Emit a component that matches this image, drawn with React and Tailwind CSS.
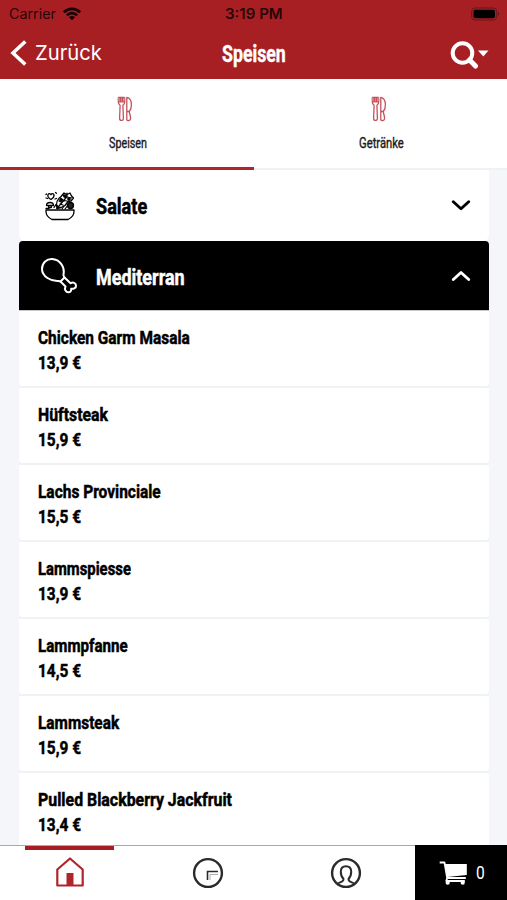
import { useLayoutEffect, useRef } from "react";

// Condensed label: squeezes its text horizontally to the given width.
function Fit({ w, className = "", children }) {
  const ref = useRef(null);
  useLayoutEffect(() => {
    const fit = () => {
      const el = ref.current;
      if (el) el.style.transform = `scaleX(${w / el.offsetWidth})`;
    };
    fit();
    document.fonts?.ready.then(fit);
  }, [w]);
  return (
    <span className="block" style={{ width: w }}>
      <span ref={ref} className={`inline-block origin-left whitespace-nowrap align-top ${className}`}>
        {children}
      </span>
    </span>
  );
}

const dishes = [
  ["Chicken Garm Masala", "13,9 €", 152],
  ["Hüftsteak", "15,9 €", 70],
  ["Lachs Provinciale", "15,5 €", 123],
  ["Lammspiesse", "13,9 €", 93],
  ["Lammpfanne", "14,5 €", 90],
  ["Lammsteak", "15,9 €", 81],
  ["Pulled Blackberry Jackfruit", "13,4 €", 194],
];

function Cutlery() {
  return (
    <svg className="h-[26px] w-4" viewBox="0 0 16 26" fill="none" stroke="#c4525c" strokeWidth="1.3" strokeLinejoin="round">
      <path d="M1.300 1.500v4.200c0 2 1 2.900 1.800 3.500L2.600 22.500c0 2.600 3.800 2.600 3.800 0L5.900 9.200c1-.6 1.800-1.500 1.800-3.500V1.500" />
      <path d="M1.300 1.500h6.400v3.600H1.300z" fill="#dc8d95" stroke="none" />
      <path d="M1.300 1.300h6.400M3.400 1.500v5M5.500 1.500v5M1.400 5.800h6.200" />
      <path d="M9.800 1.300v22.400c.5 1.300 3.800 1.200 3.800-1.200 0-2.400-.8-4.500-1.400-6.800 1.500-1.700 2.300-4 2.200-7.200C14.300 4.500 12.300 1.800 9.800 1.300zM10 15.500h2" />
    </svg>
  );
}

function Salad() {
  return (
    <svg className="h-[30px] w-[30px]" viewBox="0 0 30 30" fill="none" stroke="#000" strokeWidth="1.3" strokeLinecap="round" strokeLinejoin="round">
      <path d="M1 19h28v1.500c0 4-3 6.500-6 8H7c-3-1.500-6-4-6-8z" />
      <path d="M6 8.500C3.500 7 2.300 5.500 3 3.700c.7-1.500 2.300-1.300 3 0 .7-1.300 2.600-1.500 3 .2.400 1.700-1 3.300-3 4.600zM1 7l1.500.5M10.500 1.500l1 .7M1 3.500l.5-.5M10 8l1.500-.5" />
      <path d="M1.500 14.500c0-4 7-4 7 0zM3.700 14.500v2h2.600v-2M1 17.500h3M9 16.500l2-3 3 3" />
      <circle cx="25.500" cy="14.500" r="3" fill="#222" />
      <path d="M12 17.500c-1-4-.5-9 4-12l3-3.500 3 1.500 3-1.500 1.500 3 2 2-2.500 3-3 .5-3 4-4 2z" />
      <path d="M12 17.500l10-12M14 10l3 1.500M15.500 7l3.500 3M18 4l3 3M22 2v4l5 1M22 10l-3-.5M18 14l-3-1M20 18l3-4M17 18l2-3" strokeWidth="1.200" />
      <circle cx="16" cy="9" r="1.200" fill="#000" />
      <circle cx="20" cy="5" r="1.200" fill="#000" />
      <circle cx="24" cy="8" r="1.200" fill="#000" />
    </svg>
  );
}

function Drumstick() {
  return (
    <svg className="h-[38px] w-[38px]" viewBox="0 0 38 38" fill="none" stroke="#fff" strokeWidth="2" strokeLinecap="round" strokeLinejoin="round">
      <path d="M18.500 24C11 24.500 2 19.500 2 12 2 5.500 7 1.800 12 2c8 .5 13 8 11.500 15.500-.2 1.500 0 2 1 3l-4 4z" />
      <path d="M20.500 24.500l5 5c-1.500 3 .5 5.800 2.800 5.800 2 0 3.200-1.500 2.900-3.500 2.800.2 5-1 4.800-3.300-.2-2.500-3-3.700-5.500-2.200l-6-5.800" />
    </svg>
  );
}

function Chevron({ up }) {
  return (
    <svg className="h-3 w-5" viewBox="0 0 20 12" fill="none" stroke="currentColor" strokeWidth="2.900" strokeLinecap="round" strokeLinejoin="round">
      <path d={up ? "M2.300 9.500L10 2.500l7.700 7" : "M2.300 1.800L10 8.800l7.700-7"} />
    </svg>
  );
}

function Header() {
  return (
    <header className="h-[79px] shrink-0 bg-[#a71e23]">
      <div className="grid h-7 grid-cols-3 items-center pl-[9px] pr-[7px] text-black/80">
        <div className="flex items-center gap-[7px]">
          <div className="pt-[3px]">
            <Fit w={47} className="text-[14px] leading-5">Carrier</Fit>
          </div>
          <svg className="h-[14px] w-[18px]" viewBox="0 0 18 14" fill="none" stroke="#180505" strokeWidth="2.700">
            <path d="M.9 5.300c4.500-4.500 11.700-4.500 16.200 0M3.900 8.300c2.900-2.900 7.300-2.900 10.200 0" />
            <path d="M5.900 10.200c1.800-1.700 4.400-1.700 6.200 0L9 13.300z" fill="#180505" stroke="none" />
          </svg>
        </div>
        <div className="flex justify-center pt-[3px]">
          <Fit w={58} className="text-[14px] font-semibold leading-5">3:19 PM</Fit>
        </div>
        <div className="flex justify-end">
          <svg className="h-[14px] w-[29px]" viewBox="0 0 29 14">
            <rect x=".7" y="1" width="25" height="12" rx="3.500" fill="none" stroke="#66161a" />
            <rect x="2.500" y="2.700" width="21.500" height="8.600" rx="2" fill="#000" />
            <path d="M27 5c1.500.5 1.500 3.500 0 4z" fill="#66161a" />
          </svg>
        </div>
      </div>
      <div className="grid h-[51px] grid-cols-3 items-center text-white">
        <div className="flex items-center gap-2 pb-[2px] pl-[10px]">
          <svg className="h-[26px] w-[17px]" viewBox="0 0 17 26" fill="none" stroke="#fff" strokeWidth="3.600">
            <path d="M15.300 1.500L3 13l12.300 11.500" />
          </svg>
          <Fit w={67} className="text-[20.500px] leading-7">Zurück</Fit>
        </div>
        <div className="flex justify-center pt-[2px]">
          <Fit w={64} className="font-[Roboto] text-[23px] font-bold leading-7 [-webkit-text-stroke:0.4px]">Speisen</Fit>
        </div>
        <div className="flex justify-end pr-[18px] pt-[2px]">
          <svg className="h-[28px] w-[40px]" viewBox="0 0 40 28">
            <circle cx="13.500" cy="12" r="9.800" fill="none" stroke="#fff" strokeWidth="4" />
            <path d="M20.500 19l6 6" stroke="#fff" strokeWidth="5" strokeLinecap="round" />
            <path d="M29 9.500h10.500l-5.200 6z" fill="#fff" />
          </svg>
        </div>
      </div>
    </header>
  );
}

function Tab({ label, w, active }) {
  return (
    <div className={`flex flex-1 flex-col items-center pt-[17px] ${active ? "border-b-[3px] border-[#b0242c]" : "border-b-2 border-[#f0f1f4]"}`}>
      <div className="mr-[3px]"><Cutlery /></div>
      <div className="mt-[11px] pl-[2px]">
        <Fit w={w} className="font-[Roboto] text-[15px] leading-5 text-[#1c1c1c] [-webkit-text-stroke:0.4px]">{label}</Fit>
      </div>
    </div>
  );
}

function BottomBar() {
  return (
    <nav className="flex h-[55px] shrink-0 border-t border-[#a9a9a9] bg-white">
      <div className="flex w-[139px] flex-col items-center">
        <div className="h-[4px] w-[89px] bg-[#a81c22]" />
        <svg className="mt-[7px] h-[31px] w-[28px]" viewBox="0 0 28 31" fill="none" stroke="#b0252b" strokeWidth="2.200" strokeLinejoin="round">
          <path d="M14 1.500L1.300 12.500V28.500h25.400v-16z" />
          <path d="M10.500 28V16h7v12z" fill="#b0252b" stroke="none" />
        </svg>
      </div>
      <div className="flex w-[138px] items-center justify-center">
        <svg className="h-8 w-8" viewBox="0 0 32 32" fill="none" stroke="#2b2b2e" strokeWidth="2.400">
          <circle cx="16" cy="16" r="13.900" />
          <path d="M15.500 23v-8.500H26" strokeWidth="1.600" />
          <path d="M18 23v-5.500h8" strokeWidth=".8" stroke="#999" />
        </svg>
      </div>
      <div className="flex w-[138px] items-center justify-center">
        <svg className="h-8 w-8" viewBox="0 0 32 32" fill="none" stroke="#2b2b2e" strokeWidth="2.400">
          <circle cx="16" cy="16" r="13.900" />
          <path d="M8 26.500c1.500-1.500 5.500-1 5.500-4.500-2-2-2.800-4.500-2.700-7.500.1-3.500 2-5.300 5.200-5.300s5.100 1.800 5.200 5.300c.1 3-.7 5.500-2.700 7.500 0 3.500 4 3 5.500 4.500" strokeWidth="2" />
        </svg>
      </div>
      <div className="-mt-px flex flex-1 items-center bg-black pl-6 text-white">
        <svg className="h-6 w-7 shrink-0" viewBox="0 0 28 24">
          <path d="M.7 1.500h4.800L8.200 17h18.600M8.200 17l-.9 3h18.500" fill="none" stroke="#fff" strokeWidth="1.800" strokeLinejoin="round" />
          <path d="M6 3h21.800v11L8.300 16z" fill="#fff" />
          <circle cx="8.700" cy="21.700" r="2.100" fill="#fff" />
          <circle cx="23.700" cy="21.700" r="2.100" fill="#fff" />
        </svg>
        <div className="ml-[9px]">
          <Fit w={9} className="font-[Roboto] text-[19px] leading-6">0</Fit>
        </div>
      </div>
    </nav>
  );
}

export default function App() {
  return (
    <div className="flex h-[900px] w-[507px] flex-col overflow-hidden bg-[#f4f6fa] font-[Inter,sans-serif]">
      <Header />
      <div className="flex h-[91px] shrink-0 bg-white">
        <Tab label="Speisen" w={38} active />
        <Tab label="Getränke" w={45} />
      </div>
      <main className="min-h-0 flex-1 overflow-hidden pl-[19px] pr-[18px]">
        <section className="flex h-[71px] items-center rounded-b-md bg-white pl-[26px] pr-[18px]">
          <Salad />
          <div className="ml-[21px] flex-1 pt-[2px]">
            <Fit w={51} className="font-[Roboto] text-[22px] font-bold leading-7 [-webkit-text-stroke:0.5px]">Salate</Fit>
          </div>
          <Chevron />
        </section>
        <section className="flex h-[69px] items-center rounded-t-[4px] bg-black pl-[21px] pr-[18px] text-white">
          <Drumstick />
          <div className="ml-[18px] flex-1 pt-[4px]">
            <Fit w={89} className="font-[Roboto] text-[22px] font-bold leading-7 [-webkit-text-stroke:0.5px]">Mediterran</Fit>
          </div>
          <Chevron up />
        </section>
        <ul className="border-t border-[#c9c9c9]">
          {dishes.map(([name, price, w]) => (
            <li key={name} className="h-[77px] border-b-2 border-[#f1f2f4]">
              <div className="h-[75px] rounded-b bg-white pl-[18.500px] pt-[14px]">
                <Fit w={w} className="font-[Roboto] text-[19px] font-bold leading-[25px] [-webkit-text-stroke:0.5px]">{name}</Fit>
                <Fit w={43} className="font-[Roboto] text-[19px] font-bold leading-[26px] [-webkit-text-stroke:0.5px]">{price}</Fit>
              </div>
            </li>
          ))}
        </ul>
      </main>
      <BottomBar />
    </div>
  );
}
